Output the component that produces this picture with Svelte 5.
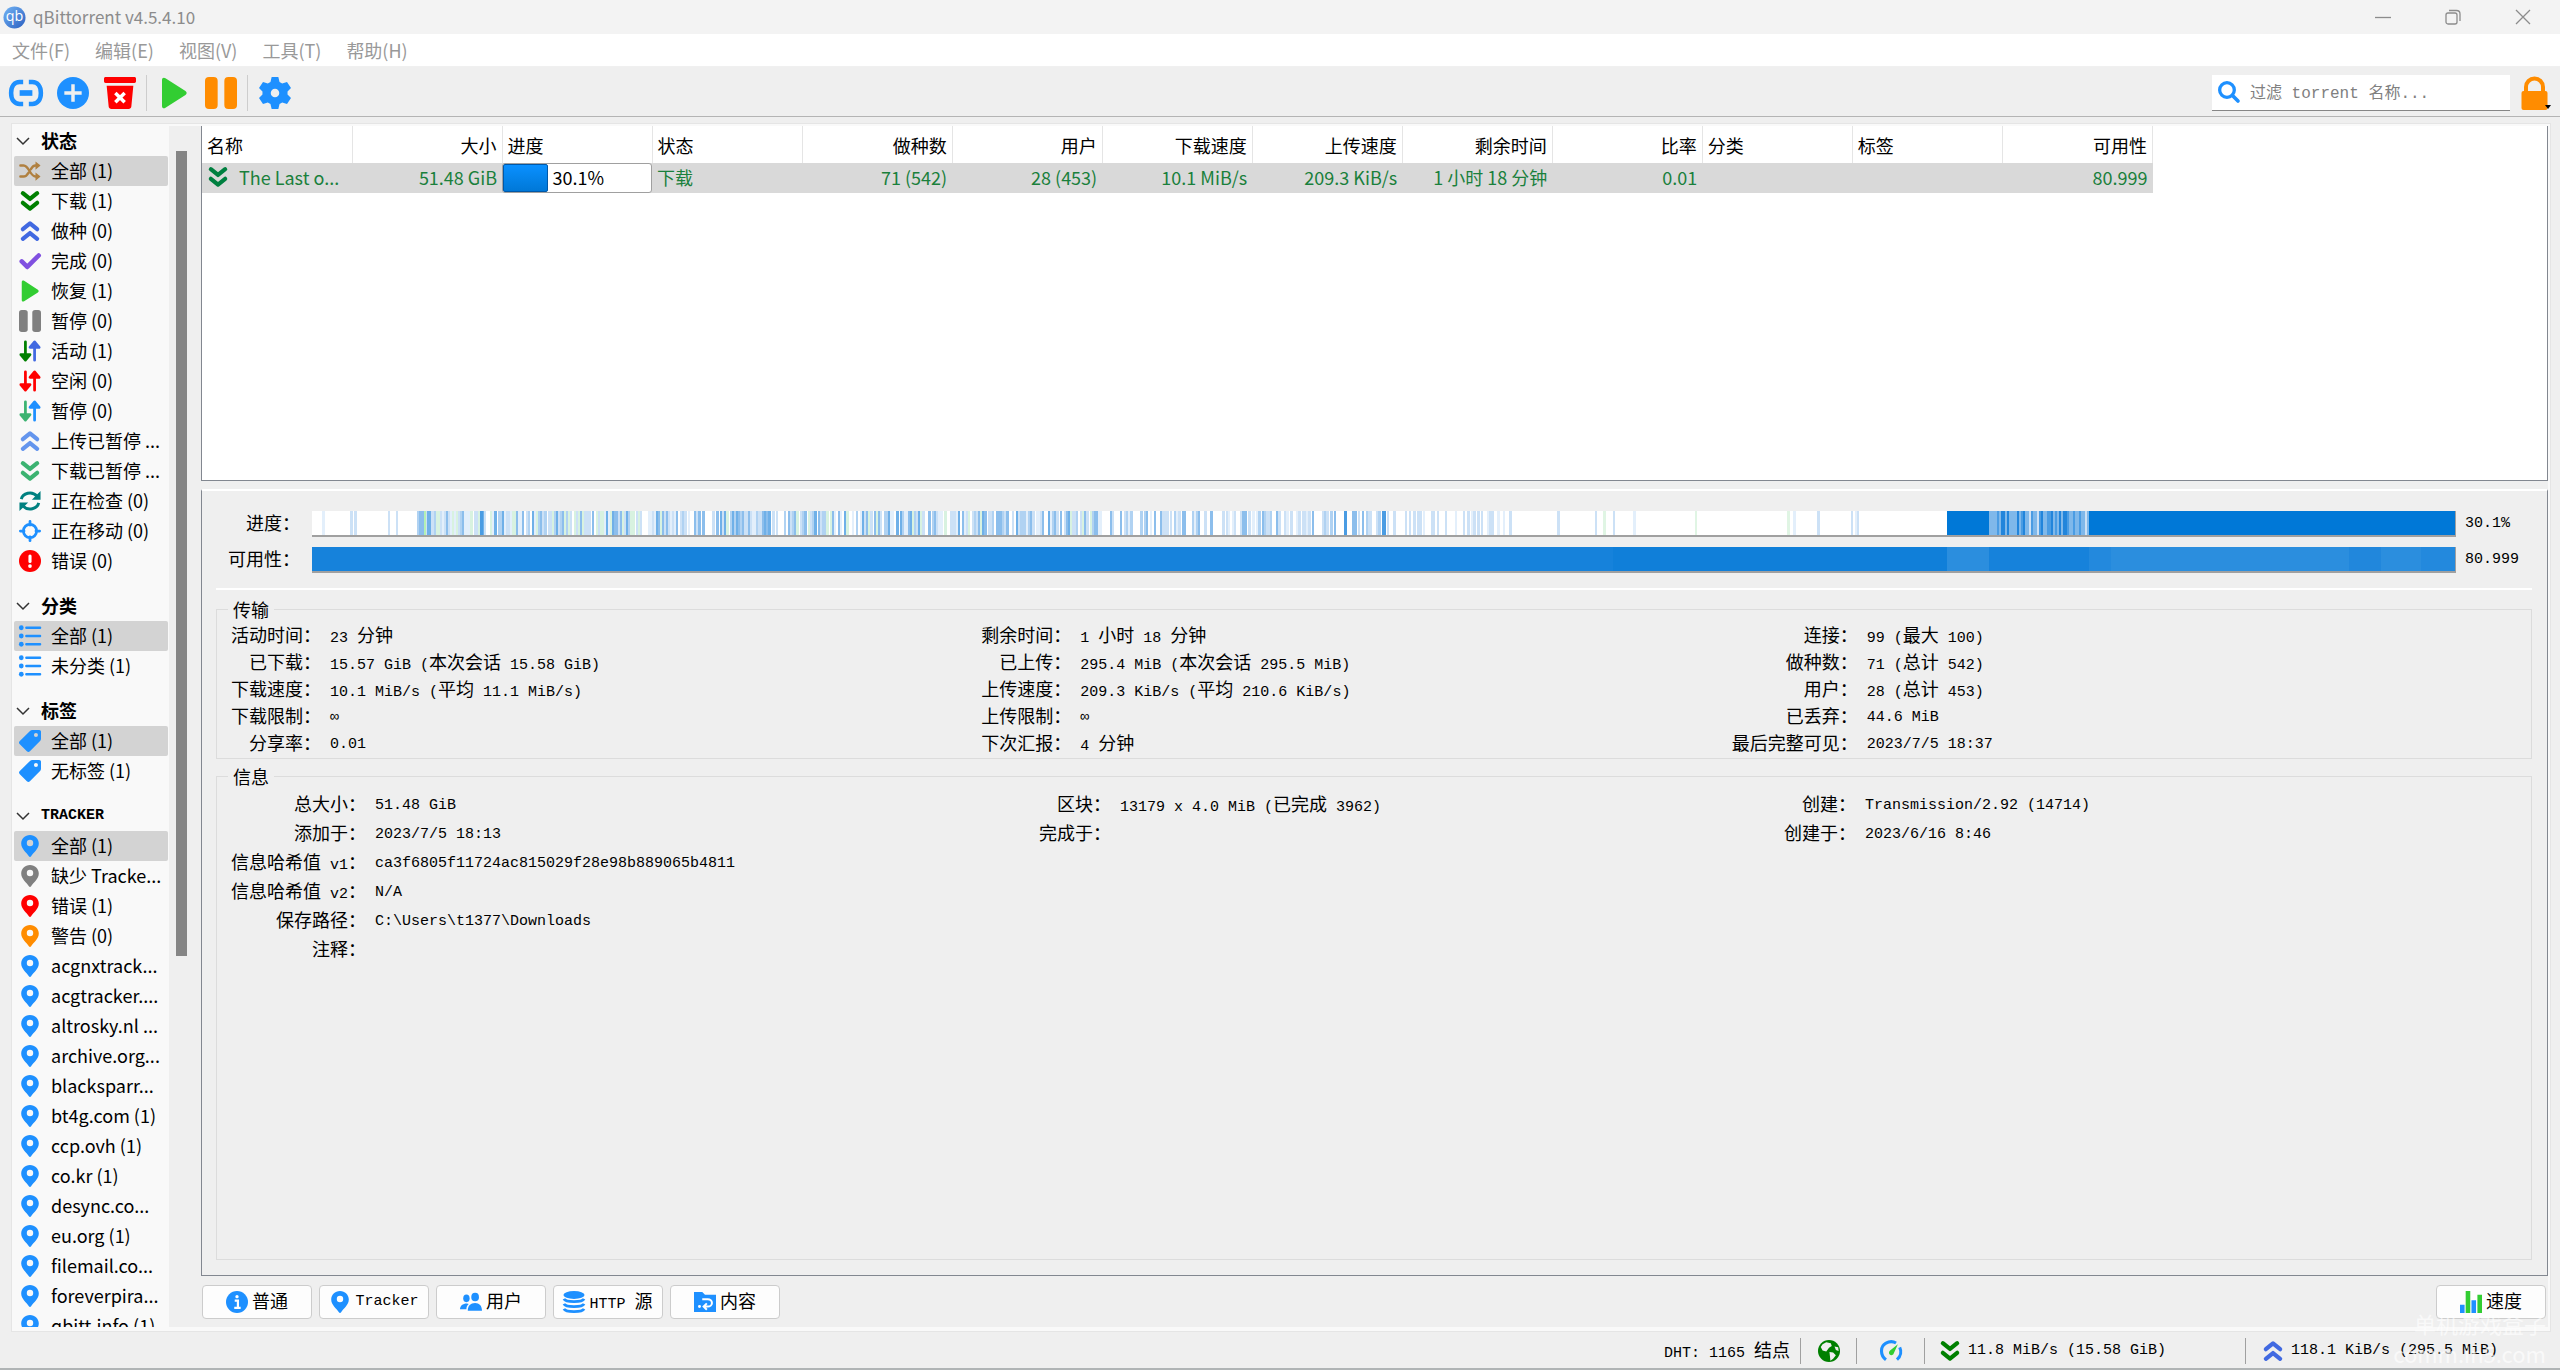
<script>
	const icons = {
		shuffle: '<path d="M1.500 6h3.500c6 0 7 12 13 12h3M1.500 18h3.500c2.400 0 4-1.700 5.300-4M13 10c1.300-2.400 2.700-4 5-4h3" fill="none" stroke="currentColor" stroke-width="2.600" stroke-linecap="round"/><path d="M18 1.500 23.500 6 18 10.500zM18 13.500l5.500 4.500-5.500 4.500z"/>',
		down: '<path d="M4.200 3.500 12 9.800l7.800-6.300M4.200 14 12 20.300l7.800-6.300" fill="none" stroke="currentColor" stroke-width="4.600" stroke-linecap="round" stroke-linejoin="round"/>',
		up: '<path d="M4.200 10 12 3.700l7.800 6.300M4.200 20.500l7.800-6.300 7.800 6.300" fill="none" stroke="currentColor" stroke-width="4.600" stroke-linecap="round" stroke-linejoin="round"/>',
		check: '<path d="M3 12.500l6 6L21.500 6" fill="none" stroke="currentColor" stroke-width="5" stroke-linecap="round" stroke-linejoin="round"/>',
		play: '<path d="M3 2.200C3 .6 4.300 0 5.600.9l15 9.600c1.200.8 1.200 2.200 0 3l-15 9.600C4.300 24 3 23.400 3 21.800z"/>',
		pause: '<rect x="0" y="0" width="9.500" height="24" rx="3"/><rect x="14.500" y="0" width="9.500" height="24" rx="3"/>',
		updown: '<path d="M7 2v18M2 16l5 6 5-6z" fill="currentColor" stroke="currentColor" stroke-width="3" stroke-linecap="round" stroke-linejoin="round"/><path d="M17 22V4M12 8l5-6 5 6z" fill="var(--alt)" stroke="var(--alt)" stroke-width="3" stroke-linecap="round" stroke-linejoin="round"/>',
		refresh: '<path d="M2.500 10C4 3.500 14 .500 19.500 6.500M21.500 14C20 20.500 10 23.500 4.500 17.500" fill="none" stroke="currentColor" stroke-width="3.200"/><path d="M23.500 1v9.500h-9.500zM.5 23v-9.500h9.500z"/>',
		target: '<circle cx="12" cy="12" r="7.200" fill="none" stroke="currentColor" stroke-width="3"/><path d="M12 1.500v4M12 18.500v4M1.500 12h4M18.500 12h4" stroke="currentColor" stroke-width="3" stroke-linecap="round"/>',
		error: '<circle cx="12" cy="12" r="12"/><path d="M12 6.500v6" stroke="#fff" stroke-width="3.400" stroke-linecap="round"/><circle cx="12" cy="17.500" r="2" fill="#fff"/>',
		list: '<circle cx="2.500" cy="3" r="2.600"/><circle cx="2.500" cy="12" r="2.600"/><circle cx="2.500" cy="21" r="2.600"/><path d="M8 3h15M8 12h15M8 21h15" stroke="currentColor" stroke-width="2.600" stroke-linecap="round"/>',
		tag: '<path fill-rule="evenodd" d="M22 0h-7.500c-1 0-1.800.300-2.500 1L.9 12c-1.200 1.200-1.200 2.300 0 3.500l7.700 7.700c1.100 1 2.200 1 3.300 0L23 12.100c.7-.7 1-1.500 1-2.500V2c0-1.200-.8-2-2-2zm-3.500 3.300a2.200 2.200 0 1 1 0 4.400 2.200 2.200 0 0 1 0-4.400z"/>',
		pin: '<path fill-rule="evenodd" d="M12 0C6.500 0 2.400 4 2.400 9.300 2.400 15 8 19 10.800 23.200c.6 1 1.800 1 2.400 0C16 19 21.600 15 21.600 9.300 21.600 4 17.500 0 12 0zm0 5.300a3.500 3.500 0 1 1 0 7 3.500 3.500 0 0 1 0-7z"/>',
		link: '<path d="M10 4.300H7.500C4 4.300 1.500 7 1.500 12s2.500 7.700 6 7.700H10M14 4.300h2.500c3.500 0 6 2.700 6 7.700s-2.500 7.700-6 7.700H14" fill="none" stroke="currentColor" stroke-width="3.200"/><path d="M7.500 10h9v4h-9z"/>',
		plus: '<circle cx="12" cy="12" r="12"/><path d="M12 5.500v13M5.500 12h13" stroke="#efefef" stroke-width="2.600"/>',
		trash: '<path d="M1.200 0h21.600c.7 0 1.200.5 1.200 1.200v2c0 .7-.5 1.300-1.200 1.300H1.200C.5 4.500 0 4 0 3.200v-2C0 .5.5 0 1.200 0zM2 6.500h20l-1.500 15.600c-.1 1.200-1 1.900-2 1.900h-13c-1 0-1.900-.7-2-1.900z"/><path d="M8.500 12l7 7M15.500 12l-7 7" stroke="#fff" stroke-width="2.600"/>',
		gear: '<path fill-rule="evenodd" d="M9.500 0h5l.9 3.700 2 1.200L21 3.800l3 4.500-2.600 2.600v2.200l2.600 2.600-3 4.500-3.600-1.100-2 1.200-.9 3.700h-5l-.9-3.700-2-1.200L3 20.200l-3-4.500 2.600-2.600v-2.200L0 8.300l3-4.500 3.600 1.100 2-1.200zM12 8.800a3.200 3.200 0 1 0 0 6.400 3.200 3.200 0 0 0 0-6.400z"/>',
		search: '<circle cx="9.800" cy="9.800" r="8" fill="none" stroke="currentColor" stroke-width="3.600"/><path d="M15.800 15.800l6 6" stroke="currentColor" stroke-width="4" stroke-linecap="round"/>',
		info: '<circle cx="12" cy="12" r="12"/><path d="M9.500 10.500H13v8M9 18.500h7" fill="none" stroke="#fff" stroke-width="2.400"/><circle cx="12" cy="6.200" r="1.800" fill="#fff"/>',
		users: '<ellipse cx="7" cy="8" rx="3.500" ry="4.200"/><ellipse cx="16.500" cy="6.500" rx="4.200" ry="4.700"/><path d="M0 20c0-4 3-6.500 7.500-6.500 1 0 1.500.2 2 .6C7.500 16 7 17.500 7 20zM8.500 21.500c0-5.500 3-8.500 8-8.500 4.500 0 7.500 3 7.500 8.500z"/>',
		database: '<ellipse cx="12" cy="4.300" rx="11.500" ry="4.300"/><path d="M1 8.500c2 4 20 4 22 0M1 14c2 4 20 4 22 0M1 19.500c2 4 20 4 22 0" fill="none" stroke="currentColor" stroke-width="3"/>',
		folder: '<path d="M0 1h9l3 3h12v19H0z"/><path d="M9 9h6a4 3.500 0 0 1 0 8h-3M14 13.500L10.500 17l3.500 3.500" fill="none" stroke="#fff" stroke-width="2.200"/><circle cx="6" cy="17" r="1.600" fill="#fff"/>',
		chart: '<path d="M0 15h5v9H0zM12.500 10h5v14h-5z"/><path d="M6.200 0h5v24h-5zM19 4h5v20h-5z" fill="#32cd32"/>',
		globe: '<circle cx="12" cy="12" r="12"/><path d="M9 2.500l5 1 1 3-3 2-3 4-4-1-2-4 2-3zM18 7l4 1 .5 4-3-1zM12.500 13l4 .5 3 3-3 4-3 2-.5-5z" fill="#efefef"/>',
		gauge: '<path d="M6.500 21.500C0 16.500 0 7 6.500 3.500c4-2.300 8-2 11-.2M18.500 21.500c4.500-4 5-9.500 3-13.500" fill="none" stroke="currentColor" stroke-width="3.400"/><path d="M19.500 4.500L14.800 15c-1 2.500-5 2-5-1 0-1 .5-1.800 1.200-2.500z" fill="#32cd32"/>'
	}

	const pin = (label, color = '#1e90ff') => ({ icon: 'pin', color, label })

	const sections = [
		{
			title: '状态',
			items: [
				{ icon: 'shuffle', color: '#b08040', label: '全部 (1)' },
				{ icon: 'down', color: '#008000', label: '下载 (1)' },
				{ icon: 'up', color: '#4169e1', label: '做种 (0)' },
				{ icon: 'check', color: '#8050e0', label: '完成 (0)' },
				{ icon: 'play', color: '#32cd32', label: '恢复 (1)' },
				{ icon: 'pause', color: '#808080', label: '暂停 (0)' },
				{ icon: 'updown', color: '#008000', alt: '#4169e1', label: '活动 (1)' },
				{ icon: 'updown', color: '#ff0000', alt: '#ff0000', label: '空闲 (0)' },
				{ icon: 'updown', color: '#3cb371', alt: '#1e90ff', label: '暂停 (0)' },
				{ icon: 'up', color: '#6495ed', label: '上传已暂停 ...' },
				{ icon: 'down', color: '#3cb371', label: '下载已暂停 ...' },
				{ icon: 'refresh', color: '#008080', label: '正在检查 (0)' },
				{ icon: 'target', color: '#1e90ff', label: '正在移动 (0)' },
				{ icon: 'error', color: '#ff0000', label: '错误 (0)' }
			]
		},
		{
			title: '分类',
			items: [
				{ icon: 'list', color: '#1e90ff', label: '全部 (1)' },
				{ icon: 'list', color: '#1e90ff', label: '未分类 (1)' }
			]
		},
		{
			title: '标签',
			items: [
				{ icon: 'tag', color: '#1e90ff', label: '全部 (1)' },
				{ icon: 'tag', color: '#1e90ff', label: '无标签 (1)' }
			]
		},
		{
			title: 'TRACKER',
			items: [
				pin('全部 (1)'),
				pin('缺少 Tracke...', '#808080'),
				pin('错误 (1)', '#ff0000'),
				pin('警告 (0)', '#ff8c00'),
				pin('acgnxtrack...'),
				pin('acgtracker....'),
				pin('altrosky.nl ...'),
				pin('archive.org...'),
				pin('blacksparr...'),
				pin('bt4g.com (1)'),
				pin('ccp.ovh (1)'),
				pin('co.kr (1)'),
				pin('desync.co...'),
				pin('eu.org (1)'),
				pin('filemail.co...'),
				pin('foreverpira...'),
				pin('qbitt.info (1)')
			]
		}
	]

	const menus = ['文件(F)', '编辑(E)', '视图(V)', '工具(T)', '帮助(H)']

	const columns = [
		{ name: '名称' },
		{ name: '大小', right: true, value: '51.48 GiB' },
		{ name: '进度' },
		{ name: '状态', value: '下载' },
		{ name: '做种数', right: true, value: '71 (542)' },
		{ name: '用户', right: true, value: '28 (453)' },
		{ name: '下载速度', right: true, value: '10.1 MiB/s' },
		{ name: '上传速度', right: true, value: '209.3 KiB/s' },
		{ name: '剩余时间', right: true, value: '1 小时 18 分钟' },
		{ name: '比率', right: true, value: '0.01' },
		{ name: '分类', value: '' },
		{ name: '标签', value: '' },
		{ name: '可用性', right: true, value: '80.999' }
	]

	const transfer = [
		['活动时间：', '23 分钟', '剩余时间：', '1 小时 18 分钟', '连接：', '99 (最大 100)'],
		['已下载：', '15.57 GiB (本次会话 15.58 GiB)', '已上传：', '295.4 MiB (本次会话 295.5 MiB)', '做种数：', '71 (总计 542)'],
		['下载速度：', '10.1 MiB/s (平均 11.1 MiB/s)', '上传速度：', '209.3 KiB/s (平均 210.6 KiB/s)', '用户：', '28 (总计 453)'],
		['下载限制：', '∞', '上传限制：', '∞', '已丢弃：', '44.6 MiB'],
		['分享率：', '0.01', '下次汇报：', '4 分钟', '最后完整可见：', '2023/7/5 18:37']
	]

	const info = [
		['总大小：', '51.48 GiB', '区块：', '13179 x 4.0 MiB (已完成 3962)', '创建：', 'Transmission/2.92 (14714)'],
		['添加于：', '2023/7/5 18:13', '完成于：', '', '创建于：', '2023/6/16 8:46'],
		['信息哈希值 v1：', 'ca3f6805f11724ac815029f28e98b889065b4811', '', '', '', ''],
		['信息哈希值 v2：', 'N/A', '', '', '', ''],
		['保存路径：', 'C:\\Users\\t1377\\Downloads', '', '', '', ''],
		['注释：', '', '', '', '', '']
	]

	const tabs = [
		['info', '普通'],
		['pin', 'Tracker'],
		['users', '用户'],
		['database', 'HTTP 源'],
		['folder', '内容']
	]

	// split into wide (Chinese) and half-width runs, each has its own font size
	const runs = (text) =>
		(text.match(/[\u3000-\uffef]+|[^\u3000-\uffef]+/g) || []).map((t) => ({ t, wide: t.charCodeAt(0) > 0x2fff }))

	let seed = 7
	const random = () => {
		seed = (seed * 16807) % 2147483647
		return seed / 2147483647
	}

	// [from, to, share of pieces we have]
	const zones = [
		[10, 105, 0.14],
		[105, 120, 0.95],
		[120, 260, 0.92],
		[260, 360, 0.85],
		[360, 400, 0.55],
		[400, 540, 0.72],
		[540, 700, 0.8],
		[700, 790, 0.85],
		[790, 960, 0.62],
		[960, 1080, 0.5],
		[1080, 1200, 0.3],
		[1200, 1630, 0.07]
	]
	const shades = ['#e3effb', '#cce1f6', '#cce1f6', '#b0d2f2', '#8cbeec', '#6fb0e8', '#d8f2e0']

	const pieces = []
	for (const [from, to, share] of zones) {
		for (let x = from; x < to; x += 2) {
			if (random() > share) continue
			const limit = share > 0.7 ? 7 : share > 0.3 ? 5 : 3
			pieces.push({ x, w: random() > 0.5 ? 3 : 2, fill: share < 0.3 && random() < 0.2 ? '#e0f5e4' : shades[Math.floor(random() * limit)] })
		}
	}
	pieces.push({ x: 112, w: 2, fill: '#b4f0b4' }, { x: 168, w: 3, fill: '#4a9ce3' }, { x: 1032, w: 3, fill: '#4a9ce3' }, { x: 1070, w: 3, fill: '#4a9ce3' })
	pieces.push({ x: 1634, w: 508, fill: '#0078d7' })
	for (let x = 1676; x < 1776; x += 2) {
		const r = random()
		pieces.push({ x, w: 2, fill: r > 0.9 ? '#cce1f6' : r > 0.55 ? '#7fb8ea' : r > 0.25 ? '#4a9ce3' : '#2285db' })
	}

	const available = [
		{ x: 0, w: 2142, fill: '#1682db' },
		{ x: 1300, w: 334, fill: '#107fd9' },
		{ x: 1634, w: 42, fill: '#2b8ede' },
		{ x: 1776, w: 22, fill: '#2389dd' },
		{ x: 1798, w: 238, fill: '#2b8ede' },
		{ x: 2036, w: 32, fill: '#2187dc' },
		{ x: 2068, w: 40, fill: '#2b8ede' },
		{ x: 2108, w: 34, fill: '#2389dd' }
	]

	let filter = $state('')
</script>

{#snippet icon(name)}
	<svg class="icon" viewBox="0 0 24 24" fill="currentColor" aria-hidden="true">{@html icons[name]}</svg>
{/snippet}

{#snippet mono(text)}
	{#each runs(text) as run}<span class:wide={run.wide}>{run.t}</span>{/each}
{/snippet}

{#snippet strip(label, list, value)}
	<div class="strip">
		<span class="strip-label">{@render mono(label)}</span>
		<svg class="strip-bar" viewBox="0 0 2142 24" preserveAspectRatio="none" shape-rendering="crispEdges">
			{#each list as p}<rect x={p.x} y="0" width={p.w} height="24" fill={p.fill} />{/each}
		</svg>
		<span class="strip-value">{value}</span>
	</div>
{/snippet}

{#snippet group(title, rows, kind)}
	<fieldset class={kind}>
		<legend>{@render mono(title)}</legend>
		<div class="facts">
			{#each rows as row}
				{#each row as cell, i}
					<span class:key={i % 2 === 0}>{@render mono(cell)}</span>
				{/each}
			{/each}
		</div>
	</fieldset>
{/snippet}

<div class="window">
	<header class="titlebar">
		<svg class="logo" viewBox="0 0 24 24" aria-hidden="true">
			<defs>
				<linearGradient id="ball" x1="0" y1="0" x2="1" y2="1">
					<stop offset="0" stop-color="#72b4f5" />
					<stop offset="1" stop-color="#2b5fc0" />
				</linearGradient>
			</defs>
			<circle cx="12" cy="12" r="11.500" fill="url(#ball)" />
			<text x="12" y="16" text-anchor="middle">qb</text>
		</svg>
		<span class="title">qBittorrent v4.5.4.10</span>
		<button aria-label="最小化"><svg viewBox="0 0 16 16"><path d="M0 8.500h16" /></svg></button>
		<button aria-label="还原"><svg viewBox="0 0 16 16"><rect x="1" y="4" width="11" height="11" rx="2" /><path d="M4 1.500h7.500c2 0 3.500 1.500 3.500 3.500v7" /></svg></button>
		<button aria-label="关闭"><svg viewBox="0 0 16 16"><path d="M1 1l14 14M15 1L1 15" /></svg></button>
	</header>

	<nav class="menubar">
		{#each menus as menu}<button>{menu}</button>{/each}
	</nav>

	<div class="toolbar">
		<button class="blue wider" aria-label="添加链接">{@render icon('link')}</button>
		<button class="blue" aria-label="添加文件">{@render icon('plus')}</button>
		<button class="red" aria-label="删除">{@render icon('trash')}</button>
		<i></i>
		<button class="green" aria-label="继续">{@render icon('play')}</button>
		<button class="orange" aria-label="暂停">{@render icon('pause')}</button>
		<i></i>
		<button class="blue" aria-label="选项">{@render icon('gear')}</button>
		<label class="search">
			{@render icon('search')}
			<input type="text" placeholder="过滤 torrent 名称..." aria-label="过滤" bind:value={filter} />
		</label>
		<button class="lock" aria-label="锁定">
			<svg viewBox="0 0 30 36">
				<path d="M5 17V12a8.500 8.500 0 0 1 17 0v5" fill="none" stroke="#ff8c00" stroke-width="4" />
				<rect x="0.500" y="16" width="26" height="19" rx="2" fill="#ff8c00" />
				<path d="M24 30h6l-3 4z" fill="#000" />
			</svg>
		</button>
	</div>

	<div class="frame">
		<aside>
			<div class="filters">
				{#each sections as section}
					<section>
						<h3>
							<svg viewBox="0 0 14 9"><path d="M1 1l6 6 6-6" /></svg>
							{@render mono(section.title)}
						</h3>
						{#each section.items as item, i}
							<button class:selected={i === 0} style:--tint={item.color} style:--alt={item.alt}>
								{@render icon(item.icon)}
								<span>{item.label}</span>
							</button>
						{/each}
					</section>
				{/each}
			</div>
			<div class="scrollbar"><div class="thumb"></div></div>
		</aside>

		<main>
			<div class="torrents">
				<table>
					<thead>
						<tr>
							{#each columns as column}<th class:right={column.right}>{column.name}</th>{/each}
						</tr>
					</thead>
					<tbody>
						<tr>
							{#each columns as column, i}
								{#if i === 0}
									<td class="name"><div>{@render icon('down')}<span>The Last o...</span></div></td>
								{:else if i === 2}
									<td class="progress"><div><b style:width="30.1%"></b><span>30.1%</span></div></td>
								{:else}
									<td class:right={column.right}>{column.value}</td>
								{/if}
							{/each}
						</tr>
					</tbody>
				</table>
			</div>

			<div class="details">
				{@render strip('进度：', pieces, '30.1%')}
				{@render strip('可用性：', available, '80.999')}
				<hr />
				{@render group('传输', transfer, 'transfer')}
				{@render group('信息', info, 'info')}
			</div>

			<div class="tabs">
				{#each tabs as [name, label]}
					<button>{@render icon(name)}<span>{@render mono(label)}</span></button>
				{/each}
				<button class="speed">{@render icon('chart')}<span>{@render mono('速度')}</span></button>
			</div>
		</main>
	</div>

	<footer>
		<span class="dht">{@render mono('DHT: 1165 结点')}</span>
		<span class="cell globe">{@render icon('globe')}</span>
		<span class="cell gauge">{@render icon('gauge')}</span>
		<span class="cell dl">{@render icon('down')}11.8 MiB/s (15.58 GiB)</span>
		<span class="cell ul">{@render icon('up')}118.1 KiB/s (295.5 MiB)</span>
		<div class="watermark"><span>单机游戏盒子</span><span>comm.in5.com</span></div>
	</footer>
</div>

<style>
	:global(body) {
		margin: 0;
		background: #efefef;
	}
	.window {
		display: flex;
		flex-direction: column;
		height: 100vh;
		box-sizing: border-box;
		border-bottom: 2px solid #b0b4b5;
		overflow: hidden;
		color: #000;
		font: 18px/30px "Noto Sans CJK SC", sans-serif;
	}
	button {
		display: flex;
		align-items: center;
		padding: 0;
		border: 0;
		background: none;
		color: inherit;
		font: inherit;
		white-space: nowrap;
	}
	.icon {
		flex: none;
		width: 22px;
		height: 22px;
		overflow: visible;
	}
	.wide {
		font: 18px/20px "Noto Sans CJK SC", sans-serif;
	}
	.titlebar {
		display: flex;
		align-items: center;
		height: 34px;
		padding: 0 2px 0 3px;
		background: #f3f3f3;
		color: #8c8c8c;
	}
	.titlebar button {
		justify-content: center;
		width: 70px;
		height: 34px;
	}
	.titlebar button svg {
		width: 16px;
		height: 16px;
		fill: none;
		stroke: #8c8c8c;
		stroke-width: 1.300;
	}
	.logo {
		width: 23px;
		height: 23px;
		margin-right: 7px;
	}
	.logo text {
		fill: #fff;
		font: 15px "Open Sans", sans-serif;
	}
	.title {
		flex: 1;
		font-size: 17px;
	}
	.menubar {
		display: flex;
		gap: 25px;
		height: 32px;
		padding-left: 12px;
		border-bottom: 1px solid #f0f0f0;
		background: #fff;
		color: #999;
	}
	.toolbar {
		display: flex;
		align-items: center;
		box-sizing: border-box;
		height: 50px;
		padding: 2px 9px 0 2px;
		border-bottom: 1px solid #b4b4b4;
	}
	.toolbar > button {
		justify-content: center;
		width: 47px;
		height: 47px;
	}
	.toolbar > button .icon {
		width: 32px;
		height: 32px;
	}
	.toolbar > .wider .icon {
		width: 34px;
		height: 34px;
	}
	.toolbar i {
		width: 1px;
		height: 36px;
		margin: 0 3px;
		background: #cdcdcd;
	}
	.blue, .tabs, .search {
		color: #1e90ff;
	}
	.red {
		color: #f00;
	}
	.green {
		color: #32cd32;
	}
	.orange {
		color: #ff8c00;
	}
	.search {
		display: flex;
		align-items: center;
		gap: 10px;
		width: 292px;
		height: 35px;
		margin-left: auto;
		padding-left: 6px;
		border-bottom: 1px solid #868686;
		background: #fff;
	}
	.search input {
		width: 240px;
		padding: 3px 0 0;
		border: 0;
		outline: 0;
		font: 16px/24px "Liberation Mono", "Noto Sans CJK SC", monospace;
	}
	.search input::placeholder {
		color: #808080;
		opacity: 1;
	}
	.toolbar > .lock {
		width: 30px;
		height: 36px;
		margin-left: 11px;
	}
	.lock svg {
		width: 30px;
		height: 36px;
	}
	.frame {
		flex: 1;
		display: flex;
		min-height: 0;
		margin: 6px 9px 0 11px;
		padding: 2px 2px 4px 0;
		border: 1px solid #e5e5e5;
		background: #f9f9f9;
	}
	aside {
		display: flex;
		width: 189px;
		overflow: hidden;
	}
	.filters {
		width: 157px;
	}
	section + section {
		margin-top: 15px;
	}
	h3 {
		display: flex;
		align-items: center;
		height: 30px;
		margin: 0;
		padding-left: 4px;
		font: bold 15px/20px "Liberation Mono", monospace;
	}
	h3 svg {
		width: 14px;
		height: 9px;
		margin-right: 11px;
		fill: none;
		stroke: #333;
		stroke-width: 1.500;
	}
	h3 .wide {
		padding-bottom: 2px;
		font-weight: bold;
	}
	section button {
		gap: 10px;
		width: 154px;
		height: 30px;
		margin-left: 2px;
		padding-left: 5px;
		border-radius: 2px;
	}
	section button .icon {
		color: var(--tint);
	}
	section button span {
		padding-bottom: 2px;
	}
	.selected {
		background: #d3d3d3;
	}
	.scrollbar {
		width: 32px;
		background: #efefef;
	}
	.thumb {
		width: 11px;
		height: 67%;
		margin: 25px 0 0 7px;
		background: #858585;
	}
	main {
		flex: 1;
		display: flex;
		flex-direction: column;
		min-width: 0;
		background: #efefef;
	}
	.torrents {
		height: 354px;
		border: 1px solid #828790;
		border-top: 0;
		background: #fff;
	}
	table {
		table-layout: fixed;
		width: 1951px;
		border-collapse: collapse;
	}
	th, td {
		width: 150px;
		box-sizing: border-box;
		padding: 0 5px;
		text-align: left;
		white-space: nowrap;
	}
	th {
		height: 37px;
		border-right: 1px solid #e5e5e5;
		font-weight: normal;
	}
	td {
		height: 30px;
		padding-bottom: 3px;
		background: #d9d9d9;
		color: #1a803c;
		line-height: 26px;
	}
	.right {
		text-align: right;
	}
	.name div {
		display: flex;
		align-items: center;
		gap: 10px;
	}
	.name .icon {
		color: #008040;
	}
	.progress {
		padding: 0;
	}
	.progress div {
		display: flex;
		height: 28px;
		border: 1px solid #a0a0a0;
		border-radius: 3px;
		background: #fff;
		color: #000;
	}
	.progress b {
		box-sizing: border-box;
		border: 1px solid #0058a8;
		border-radius: 2px;
		background: linear-gradient(#0a90ff, #0078d7);
	}
	.progress span {
		margin-left: 5px;
	}
	.details {
		flex: 1;
		display: flex;
		flex-direction: column;
		min-height: 0;
		margin-top: 8px;
		padding: 20px 15px 15px 14px;
		border: 1px solid #828790;
		border-top: 2px solid #fff;
		font: 15px/20px "Liberation Mono", monospace;
	}
	.strip {
		display: flex;
		align-items: center;
		height: 26px;
		margin-bottom: 10px;
	}
	.strip-label {
		width: 84px;
		margin-right: 12px;
		text-align: right;
	}
	.strip-bar {
		flex: 1;
		height: 24px;
		min-width: 0;
		border-right: 1px solid #a0a0a0;
		border-bottom: 2px solid #a0a0a0;
		background: #fff;
	}
	.strip-value {
		width: 67px;
		margin-left: 9px;
	}
	hr {
		width: 100%;
		height: 2px;
		margin: 5px 0 10px;
		border: 0;
		background: #fff;
	}
	fieldset {
		min-width: 0;
		margin: 0;
		border: 1px solid #dcdcdc;
	}
	legend {
		height: 18px;
		padding: 0 5px;
		line-height: 18px;
	}
	legend .wide {
		line-height: 18px;
	}
	.transfer {
		padding: 5px 22px 0 11px;
		margin-bottom: 8px;
	}
	.info {
		flex: 1;
		padding: 6px 11px 0;
	}
	.facts {
		display: grid;
		grid-template-columns: repeat(3, auto 1fr);
		column-gap: 9px;
		grid-auto-rows: 27px;
		align-items: center;
		margin-left: 3px;
		white-space: nowrap;
	}
	.info .facts {
		grid-auto-rows: 29px;
	}
	.key {
		text-align: right;
	}
	.tabs {
		display: flex;
		gap: 7px;
		padding: 9px 2px 8px 1px;
	}
	.tabs button {
		justify-content: center;
		gap: 4px;
		box-sizing: border-box;
		width: 110px;
		height: 34px;
		border: 1px solid #ccc;
		border-radius: 4px;
		background: #fdfdfd;
		font: 15px/20px "Liberation Mono", monospace;
	}
	.tabs span {
		color: #000;
	}
	.tabs .speed {
		margin-left: auto;
	}
	footer {
		position: relative;
		display: flex;
		align-items: center;
		justify-content: flex-end;
		box-sizing: border-box;
		height: 36px;
		padding: 2px 2px 0 0;
		font: 15px/20px "Liberation Mono", monospace;
	}
	.dht {
		margin-right: 10px;
	}
	.cell {
		display: flex;
		align-items: center;
		box-sizing: border-box;
		height: 26px;
		border-left: 1px solid #a0a0a0;
	}
	.globe {
		width: 56px;
		padding-left: 17px;
		color: #008000;
	}
	.gauge {
		width: 68px;
		padding-left: 23px;
		color: #1e90ff;
	}
	.dl, .ul {
		gap: 7px;
	}
	.dl {
		width: 321px;
		padding-left: 14px;
	}
	.ul {
		width: 313px;
		padding-left: 16px;
	}
	.dl .icon {
		color: #008000;
	}
	.ul .icon {
		color: #4169e1;
	}
	.watermark {
		position: absolute;
		right: 14px;
		bottom: 0;
		display: flex;
		flex-direction: column;
		align-items: flex-end;
		color: #ffffffa0;
		font: 22px/30px "Noto Sans CJK SC", sans-serif;
	}
</style>
